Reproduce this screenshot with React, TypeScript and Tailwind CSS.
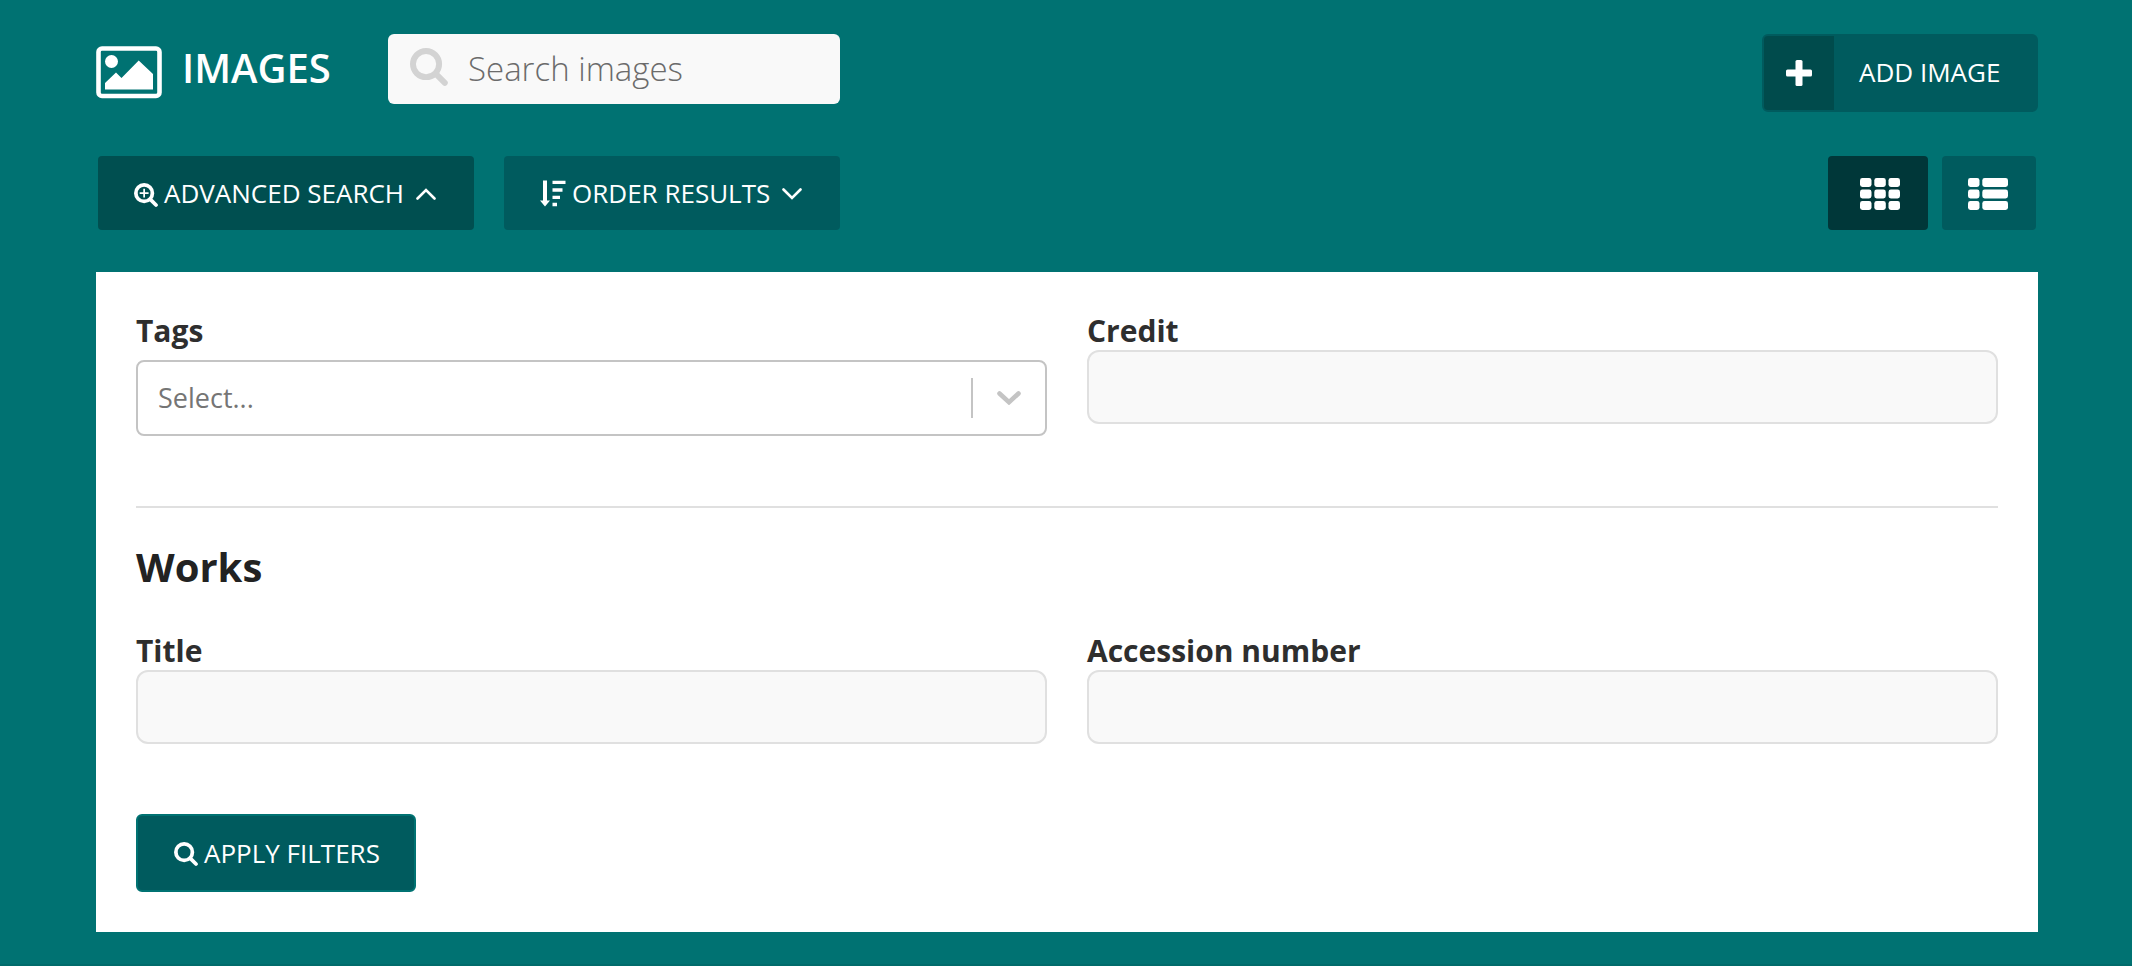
import React from "react";

function SearchGlyph({ className, plus = false }: { className: string; plus?: boolean }) {
  return (
    <svg viewBox="0 0 36 36" fill="none" stroke="currentColor" className={className} aria-hidden="true">
      <circle cx="15.2" cy="15.2" r="12.4" strokeWidth="5.6" />
      <path d="M24.5 24.5 33 33" strokeWidth="5.6" strokeLinecap="round" />
      {plus && <path d="M15.2 8.5v13.4M8.5 15.2h13.4" strokeWidth="2.6" />}
    </svg>
  );
}

function PictureGlyph({ className }: { className: string }) {
  return (
    <svg viewBox="0 0 66 54" className={className} aria-hidden="true">
      <rect x="2.5" y="2.5" width="61" height="47.5" rx="3.5" fill="none" stroke="currentColor" strokeWidth="4.6" />
      <circle cx="15.5" cy="15.5" r="6.5" fill="currentColor" />
      <path d="M9 43.500v-6.500L20 26.500l5.500 5.500L42.700 14.500 57 28v15.500z" fill="currentColor" />
    </svg>
  );
}

function SortGlyph({ className }: { className: string }) {
  return (
    <svg viewBox="0 0 26 27" fill="currentColor" className={className} aria-hidden="true">
      <path d="M3 .5h4V20.500h3L5 26.500 0 20.500h3zM12.500 .7h13v3.300h-13zM12.500 8.200h10v3.500h-10zM12.500 15.700h7.500v3.300h-7.500zM12.500 22.800h4.500v3.500h-4.500z" />
    </svg>
  );
}

function ChevronGlyph({ className, up = false }: { className: string; up?: boolean }) {
  return (
    <svg viewBox="0 0 20 12" fill="none" stroke="currentColor" className={className} aria-hidden="true">
      <path d={up ? "M1.500 10.500 10 2l8.500 8.500" : "M1.500 1.500 10 10l8.500-8.500"} strokeWidth="2.600" strokeLinecap="round" />
    </svg>
  );
}

const rows = [0, 11.5, 23];

function GridGlyph({ list = false }: { list?: boolean }) {
  return (
    <svg viewBox="0 0 40 32" fill="currentColor" className="h-8 w-10 shrink-0" aria-hidden="true">
      {rows.map((y) => (
        <g key={y}>
          <rect x="0" y={y} width="11.500" height="9" rx="2.400" />
          {list ? (
            <rect x="14.300" y={y} width="25.700" height="9" rx="2.400" />
          ) : (
            <>
              <rect x="14.300" y={y} width="11.500" height="9" rx="2.400" />
              <rect x="28.500" y={y} width="11.500" height="9" rx="2.400" />
            </>
          )}
        </g>
      ))}
    </svg>
  );
}

function TextField({ id, label }: { id: string; label: string }) {
  return (
    <div className="min-w-0">
      <label htmlFor={id} className="block h-10 text-[30px] leading-[42px] font-bold">
        {label}
      </label>
      <input
        id={id}
        type="text"
        className="block h-[74px] w-full rounded-xl border-2 border-[#e0e0e0] bg-[#f9f9f9] px-5 text-[26px] outline-none"
      />
    </div>
  );
}

export default function App() {
  return (
    <main className="min-h-screen border-b-2 border-[#006b6b] bg-[#007272] pt-[34px] pr-[92px] pb-8 pl-[94px] font-['Open_Sans','Noto_Sans',sans-serif] text-white">
      <header className="flex items-start px-0.5">
        <PictureGlyph className="mt-3 h-[54px] w-[66px] shrink-0" />
        <h1 className="ml-5 w-[186px] text-[40px] leading-[68px] font-semibold">IMAGES</h1>
        <form className="ml-5 flex h-[70px] w-[452px] items-center rounded-md bg-[#f9f9f9] pl-[22px]" role="search">
          <SearchGlyph className="mb-1 size-[38px] shrink-0 text-[#d3d3d3]" />
          <input
            type="search"
            aria-label="Search images"
            placeholder="Search images"
            className="ml-5 w-full min-w-0 bg-transparent text-[33px] font-light text-[#333] outline-none placeholder:text-[#6b6b6b]"
          />
        </form>
        <a href="#add" className="ml-auto flex h-[78px] w-[276px] rounded-md border-2 border-[#005b5e] bg-[#005b5e]">
          <span className="flex w-[70px] items-center justify-center rounded-l bg-[#004b4c]">
            <svg viewBox="0 0 26 26" fill="currentColor" className="size-[26px]" aria-hidden="true">
              <rect x="9.500" y="0" width="7" height="26" rx="1.500" />
              <rect x="0" y="9.500" width="26" height="7" rx="1.500" />
            </svg>
          </span>
          <span className="flex-1 pl-[25px] text-[26px] leading-[72px]">ADD IMAGE</span>
        </a>
      </header>

      <div className="mt-11 flex h-[74px] px-1 text-[26px]">
        <button type="button" aria-expanded="true" className="flex w-[376px] items-center rounded bg-[#004f50] pl-9">
          <SearchGlyph plus className="mt-1 size-6" />
          <span className="ml-1.5">ADVANCED SEARCH</span>
          <ChevronGlyph up className="mt-0.5 ml-3 h-3 w-5" />
        </button>
        <button type="button" aria-expanded="false" className="ml-[30px] flex w-[336px] items-center rounded bg-[#005b5e] pl-9">
          <SortGlyph className="h-[27px] w-[26px]" />
          <span className="ml-1.5">ORDER RESULTS</span>
          <ChevronGlyph className="mt-0.5 ml-3 h-3 w-5" />
        </button>
        <button type="button" aria-label="Grid view" aria-pressed="true" className="ml-auto flex w-[100px] items-center rounded bg-[#003739] pt-0.5 pl-8">
          <GridGlyph />
        </button>
        <button type="button" aria-label="List view" aria-pressed="false" className="ml-3.5 flex w-[94px] items-center rounded bg-[#005b5e] pt-0.5 pl-[26px]">
          <GridGlyph list />
        </button>
      </div>

      <form className="mx-0.5 mt-[42px] bg-white px-10 pt-[38px] pb-10 text-[#2e2e2e]">
        <div className="grid grid-cols-2 gap-10 border-b-2 border-[#e0e0e0] pb-[70px]">
          <div className="min-w-0">
            <label htmlFor="tags" className="block h-10 text-[30px] leading-[42px] font-bold">
              Tags
            </label>
            <div className="mt-2.5 flex h-[76px] items-center rounded-lg border-2 border-[#c4c4c4]">
              <input
                id="tags"
                role="combobox"
                aria-expanded="false"
                aria-controls="tags-list"
                placeholder="Select..."
                className="min-w-0 flex-1 bg-transparent pl-5 text-[27px] outline-none placeholder:text-[#757575]"
              />
              <span className="h-10 w-0.5 bg-[#c4c4c4]" />
              <button type="button" aria-label="Show tags" className="flex w-[72px] items-center justify-center text-[#c4c4c4]">
                <svg viewBox="0 0 24 14" fill="none" stroke="currentColor" strokeWidth="4.600" strokeLinecap="round" className="h-3.5 w-6" aria-hidden="true">
                  <path d="M2.500 2.500 12 11.200l9.500-8.700" />
                </svg>
              </button>
            </div>
          </div>
          <TextField id="credit" label="Credit" />
        </div>

        <h2 className="mt-8 text-[40px] leading-[54px] font-bold text-[#222]">Works</h2>
        <div className="mt-9 grid grid-cols-2 gap-10">
          <TextField id="title" label="Title" />
          <TextField id="accession" label="Accession number" />
        </div>
        <button type="submit" className="mt-[70px] flex h-[78px] w-[280px] items-center rounded-md border-2 border-[#007272] bg-[#005b5e] pl-9 text-[26px] text-white">
          <SearchGlyph className="mt-0.5 size-6" />
          <span className="ml-1.5">APPLY FILTERS</span>
        </button>
      </form>
    </main>
  );
}
